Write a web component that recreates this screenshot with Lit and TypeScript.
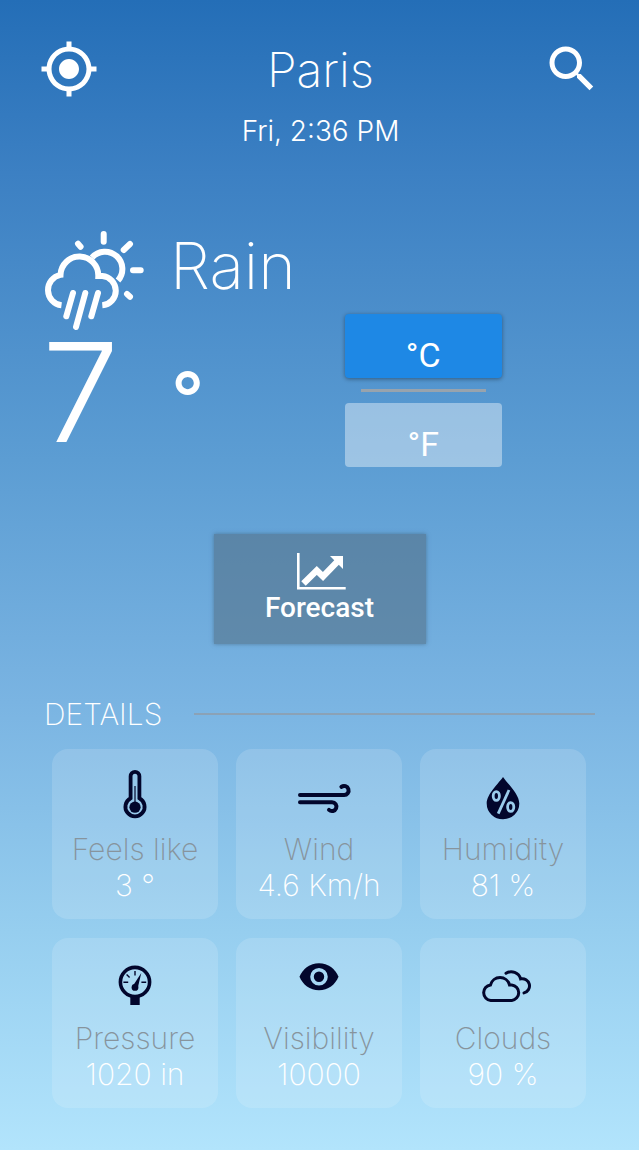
import { LitElement, html, css, svg } from "lit";
import { customElement, property, state } from "lit/decorators.js";

const icons: Record<string, unknown> = {
  thermometer: svg`
    <path d="M25.6 35.2V13.2a4.4 4.4 0 0 1 8.8 0v22a9.6 9.6 0 1 1-8.8 0z" fill="none" stroke="currentColor" stroke-width="3.8"/>
    <circle cx="30" cy="44.2" r="5.6" fill="currentColor"/>
    <path d="M30 23v17" stroke="currentColor" stroke-width="1.2"/>`,
  wind: svg`
    <path d="M11 32H55a4.5 4.5 0 1 0-2.6-8.1M11 39.3H43a4.4 4.4 0 1 1-3 7.6" fill="none" stroke="currentColor" stroke-width="4" stroke-linecap="round"/>`,
  drop: svg`
    <path d="M30 14C34 20 46.3 31 46.3 40.5a16.3 15.8 0 0 1-32.6 0C13.7 31 26 20 30 14z" fill="currentColor"/>
    <g fill="none" stroke="#9acbeb" stroke-width="2.8">
      <ellipse cx="23.3" cy="33" rx="3.1" ry="4.4"/>
      <ellipse cx="37.7" cy="44" rx="3.1" ry="4.4"/>
      <path d="M36 27 25.2 50.6"/>
    </g>`,
  gauge: svg`
    <circle cx="30" cy="30" r="14.6" fill="none" stroke="currentColor" stroke-width="3.6"/>
    <path d="M25.3 44h9.4v9h-9.4z" fill="currentColor"/>
    <circle cx="30" cy="35.4" r="3.4" fill="currentColor"/>
    <path d="M27.8 34 36.3 21 32.6 36.4z" fill="currentColor"/>
    <path d="M18.4 30.2h4.8M36.4 30.2h4.8M30 19v4.4M21.6 22.6l3 3" stroke="currentColor" stroke-width="1.4"/>`,
  eye: svg`
    <path d="M10.5 24.7C13.5 17 21 11.2 30 11.2s16.5 5.8 19.5 13.5c-3 7.7-10.5 13.5-19.5 13.5S13.5 32.4 10.5 24.7z" fill="currentColor"/>
    <circle cx="30" cy="24.7" r="7" fill="none" stroke="#a6d7f4" stroke-width="3.6"/>`,
  clouds: svg`
    <g fill="none" stroke="currentColor" stroke-width="3" stroke-linecap="round">
      <path d="M17.7 48.4a7.8 7.8 0 0 1-.2-15.5A9.8 9.8 0 0 1 36.5 32.9h2.3a7.8 7.8 0 0 1 0 15.5z"/>
      <path d="M33 21.3a9.8 9.8 0 0 1 14.6 5.6 7.2 7.2 0 0 1 3.4 14"/>
    </g>`,
};

@customElement("detail-card")
class DetailCard extends LitElement {
  @property() icon = "";
  @property() label = "";
  @property() value = "";

  static styles = css`
    :host {
      display: flex;
      flex-direction: column;
      align-items: center;
      padding: 14px 0 16px;
      border-radius: 16px;
      background: rgba(255, 255, 255, 0.14);
      font-size: 30px;
      font-weight: 200;
      line-height: 36px;
      white-space: nowrap;
    }
    .icon {
      width: 60px;
      height: 60px;
      margin-bottom: 8px;
      color: #02062c;
      overflow: visible;
    }
    .label {
      color: #87949d;
    }
    .value {
      color: #fff;
    }
  `;

  render() {
    return html`
      <svg class="icon" viewBox="0 0 60 60" aria-hidden="true">${icons[this.icon]}</svg>
      <span class="label">${this.label}</span>
      <span class="value">${this.value}</span>
    `;
  }
}

@customElement("app-root")
class AppRoot extends LitElement {
  @state() private unit = "C";

  private details = [
    { icon: "thermometer", label: "Feels like", value: "3 °" },
    { icon: "wind", label: "Wind", value: "4.6 Km/h" },
    { icon: "drop", label: "Humidity", value: "81 %" },
    { icon: "gauge", label: "Pressure", value: "1020 in" },
    { icon: "eye", label: "Visibility", value: "10000" },
    { icon: "clouds", label: "Clouds", value: "90 %" },
  ];

  static styles = css`
    :host {
      display: block;
      box-sizing: border-box;
      min-height: 100vh;
      padding: 39px 0;
      color: #fff;
      font-family: Inter, "Open Sans", sans-serif;
      font-weight: 200;
      background: linear-gradient(#246eb7, #3c80c3 15%, #5c9dd3 40%, #7ab4e2 61%, #96ceef 81%, #b2e4fc);
    }
    button {
      border: 0;
      padding: 0;
      color: inherit;
      font-family: Roboto, sans-serif;
      cursor: pointer;
    }
    h1,
    h2,
    p {
      margin: 0;
      font-weight: 200;
    }
    .header {
      display: grid;
      grid-template-columns: 60px 1fr 60px;
      align-items: start;
      padding: 0 37px 0 39px;
      text-align: center;
    }
    .tool {
      height: 60px;
      background: none;
    }
    .tool svg {
      display: block;
      width: 60px;
      height: 60px;
      fill: currentColor;
    }
    .city {
      font-size: 48px;
      line-height: 62px;
    }
    .date {
      margin-top: 12px;
      font-size: 28px;
      font-weight: 300;
      line-height: 37px;
    }
    .now {
      display: grid;
      grid-template-columns: 6fr 5fr;
      padding: 80px 42px 0;
    }
    .condition {
      display: flex;
      gap: 24px;
      font-size: 64px;
      line-height: 72px;
    }
    .weather {
      width: 104px;
      height: 104px;
      fill: none;
      stroke: currentColor;
      stroke-width: 6;
      overflow: visible;
    }
    .temperature {
      display: flex;
      gap: 52px;
      font-size: 138px;
      font-weight: 300;
      line-height: 116px;
    }
    .degree {
      font-size: 72px;
      font-weight: 500;
      line-height: 128px;
    }
    .units {
      display: flex;
      flex-direction: column;
      width: 157px;
      padding-top: 84px;
    }
    .unit {
      height: 64px;
      padding-top: 17px;
      border-radius: 4px;
      font-size: 34px;
      background: rgba(255, 255, 255, 0.4);
    }
    .unit.selected {
      background: #1e88e5;
      box-shadow: 0 1px 4px rgba(0, 0, 0, 0.4);
    }
    .split {
      height: 3px;
      margin: 11px 16px;
      background: #98a3ad;
    }
    .forecast {
      display: flex;
      flex-direction: column;
      align-items: center;
      width: 212px;
      height: 110px;
      margin: 67px auto 0;
      padding-top: 18px;
      font-size: 28px;
      font-weight: 500;
      line-height: 36px;
      background: rgba(84, 114, 136, 0.6);
      box-shadow: 0 0 4px rgba(60, 90, 115, 0.6);
    }
    .chart {
      width: 50px;
      height: 38px;
      overflow: visible;
    }
    .heading {
      display: flex;
      align-items: center;
      gap: 32px;
      margin-top: 52px;
      padding: 0 44px;
    }
    .heading h2 {
      font-size: 30px;
      line-height: 36px;
    }
    .rule {
      flex: 1;
      height: 2px;
      background: #8ba2b6;
    }
    .cards {
      display: grid;
      grid-template-columns: repeat(3, 1fr);
      gap: 19px 18px;
      margin-top: 17px;
      padding: 0 53px 0 52px;
    }
  `;

  private unitButton(unit: string) {
    return html`<button
      class="unit ${this.unit === unit ? "selected" : ""}"
      aria-pressed=${this.unit === unit ? "true" : "false"}
      @click=${() => (this.unit = unit)}
    >°${unit}</button>`;
  }

  render() {
    const degrees = this.unit === "C" ? 7 : 45;
    return html`
      <header class="header">
        <button class="tool" aria-label="Use my location">
          <svg viewBox="0 0 24 24"><path d="M12 8c-2.21 0-4 1.79-4 4s1.79 4 4 4 4-1.79 4-4-1.79-4-4-4zm8.94 3c-.46-4.17-3.77-7.48-7.94-7.94V1h-2v2.06C6.83 3.52 3.52 6.83 3.06 11H1v2h2.06c.46 4.17 3.77 7.48 7.94 7.94V23h2v-2.06c4.17-.46 7.48-3.77 7.94-7.94H23v-2h-2.06zM12 19c-3.87 0-7-3.13-7-7s3.13-7 7-7 7 3.13 7 7-3.13 7-7 7z"/></svg>
        </button>
        <div>
          <h1 class="city">Paris</h1>
          <p class="date">Fri, 2:36 PM</p>
        </div>
        <button class="tool" aria-label="Search">
          <svg viewBox="0 0 24 24"><path d="M15.5 14h-.79l-.28-.27C15.41 12.59 16 11.11 16 9.5 16 5.91 13.09 3 9.5 3S3 5.91 3 9.5 5.91 16 9.5 16c1.61 0 3.09-.59 4.23-1.57l.27.28v.79l5 4.99L20.49 19l-4.99-5zm-6 0C7.01 14 5 11.99 5 9.5S7.01 5 9.5 5 14 7.01 14 9.5 11.99 14 9.5 14z"/></svg>
        </button>
      </header>

      <section class="now">
        <div>
          <div class="condition">
            <svg class="weather" viewBox="1 1 104 104" aria-hidden="true">
              <path d="M20.5 76.3a15.4 15.4 0 0 1-1-30.4A18.9 18.9 0 0 1 57.3 47h4a14.7 14.7 0 0 1 0 29.3"/>
              <path d="M51 28.5A16.7 16.7 0 0 1 77 51.5"/>
              <path stroke-linecap="round" d="M62.7 5v7.7M89 15l-6.3 6M92 41.3h7.7M86 65l3 2.7M37 14.7l2.6 3M32 64l-6.7 23.3M44.3 64 35 98M57 64l-6.7 23.3"/>
            </svg>
            <span>Rain</span>
          </div>
          <div class="temperature">
            <span>${degrees}</span>
            <span class="degree">°</span>
          </div>
        </div>
        <div class="units">
          ${this.unitButton("C")}
          <div class="split"></div>
          ${this.unitButton("F")}
        </div>
      </section>

      <button class="forecast">
        <svg class="chart" viewBox="-1 0 50 38" fill="none" stroke="currentColor" aria-hidden="true">
          <path stroke-width="2.6" d="M2.3 1v35.3h47.4"/>
          <path stroke-width="6.4" d="M7.5 31.5 20.8 18.5l6.2 6L42 9"/>
          <path fill="currentColor" stroke="none" d="M34 4h13v13z"/>
        </svg>
        Forecast
      </button>

      <section>
        <div class="heading">
          <h2>DETAILS</h2>
          <div class="rule"></div>
        </div>
        <div class="cards">
          ${this.details.map(
            (d) => html`<detail-card icon=${d.icon} label=${d.label} value=${d.value}></detail-card>`
          )}
        </div>
      </section>
    `;
  }
}
